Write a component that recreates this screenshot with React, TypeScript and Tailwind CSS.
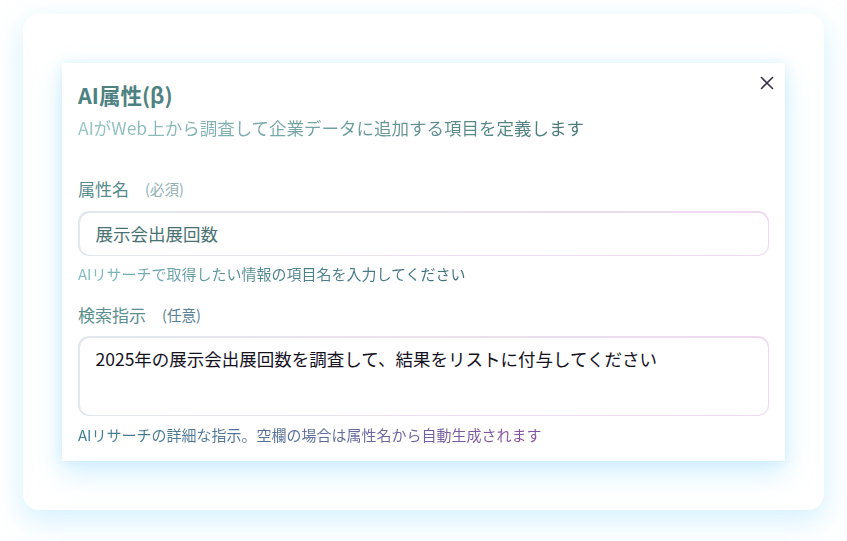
import { useState } from "react";

export default function App() {
  const [name, setName] = useState<string>("展示会出展回数");
  const [prompt, setPrompt] = useState<string>(
    "2025年の展示会出展回数を調査して、結果をリストに付与してください"
  );

  return (
    <div
      className="min-h-screen w-full bg-white flex items-center justify-center"
      style={{ fontFamily: '"Noto Sans CJK JP", "Noto Sans", sans-serif' }}
    >
      <div className="w-[801px] h-[496px] mt-[-17px] rounded-2xl bg-white shadow-[0_10px_30px_rgba(125,211,252,0.35)] px-[39px] pt-[49px]">
        <div className="relative bg-white shadow-[0_12px_26px_rgba(125,211,252,0.35),0_0_10px_rgba(186,230,253,0.45)] px-4 pt-[18px] pb-[16px]">
          <button className="absolute right-[7px] top-[9px] p-1 text-[#3b2d4d]">
            <svg width="14" height="14" viewBox="0 0 14 14" fill="none">
              <path d="M1.5 1.5L12.5 12.5M12.5 1.5L1.5 12.5" stroke="currentColor" strokeWidth="1.6" strokeLinecap="round" />
            </svg>
          </button>

          <h2 className="text-[21.5px] leading-7 font-bold text-[#4e8181]">AI属性(β)</h2>
          <p className="mt-[7px] text-[17.5px] leading-6 bg-gradient-to-r from-[#96c4c4] via-[#6f9f9f] to-[#477777] bg-clip-text text-transparent w-fit">
            AIがWeb上から調査して企業データに追加する項目を定義します
          </p>

          <label className="mt-[37px] flex items-center text-[17px] leading-6">
            <span className="text-[#578b8b]">属性名</span>
            <span className="ml-4 text-[14.5px] text-[#8fb0b0]">(必須)</span>
          </label>
          <div className="mt-[10px] rounded-[11px] bg-gradient-to-r from-[#e3e8ed] to-[#efd9f1] p-[1.5px]">
            <input
              className="w-full h-[42px] rounded-[10px] bg-white px-4 text-[17.5px] text-[#4a7272] outline-none"
              value={name}
              onChange={(e) => setName(e.target.value)}
            />
          </div>
          <p className="mt-[8px] text-[15px] leading-5 bg-gradient-to-r from-[#82bfc2] via-[#4f8590] to-[#3f6d7c] bg-clip-text text-transparent w-fit">
            AIリサーチで取得したい情報の項目名を入力してください
          </p>

          <label className="mt-[19px] flex items-center text-[17px] leading-6">
            <span className="text-[#5a9090]">検索指示</span>
            <span className="ml-4 text-[14.5px] text-[#587f94]">(任意)</span>
          </label>
          <div className="mt-[9px] rounded-[11px] bg-gradient-to-r from-[#e3e8ed] to-[#efd9f1] p-[1.5px]">
            <textarea
              className="block w-full h-[77px] resize-none rounded-[10px] bg-white px-4 pt-[9px] text-[17.5px] leading-6 text-[#15121f] outline-none"
              value={prompt}
              onChange={(e) => setPrompt(e.target.value)}
            />
          </div>
          <p className="mt-[9px] text-[15px] leading-5 bg-gradient-to-r from-[#3e808f] via-[#5a6e9a] to-[#8a4da6] bg-clip-text text-transparent w-fit">
            AIリサーチの詳細な指示。空欄の場合は属性名から自動生成されます
          </p>
        </div>
      </div>
    </div>
  );
}
